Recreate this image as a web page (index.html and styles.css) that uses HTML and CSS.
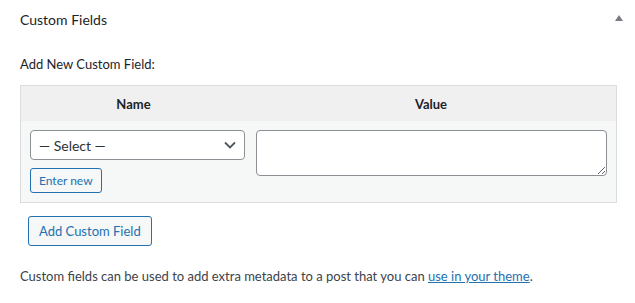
FILE: index.html
```html
<!DOCTYPE html>
<html lang="en">
<head>
<meta charset="utf-8">
<title>Custom Fields</title>
<link rel="stylesheet" href="styles.css">
</head>
<body>
<div class="postbox">
  <div class="postbox-header">
    <h2 class="hndle">Custom Fields</h2>
    <svg class="toggle" width="8" height="6" viewBox="0 0 8 6" aria-hidden="true"><polygon points="4,0 8,6 0,6" fill="#787c82"/></svg>
  </div>
  <div class="inside">
    <p class="label">Add New Custom Field:</p>
    <div class="cf-table">
      <div class="cf-head">
        <div class="cf-th">Name</div>
        <div class="cf-th">Value</div>
      </div>
      <div class="cf-row">
        <div class="cf-name">
          <div class="select">
            <span>— Select —</span>
            <svg width="12" height="8" viewBox="0 0 12 8" aria-hidden="true"><path d="M1 1.5l5 5 5-5" fill="none" stroke="#50575e" stroke-width="1.8"/></svg>
          </div>
          <a class="button small" href="#">Enter new</a>
        </div>
        <div class="cf-value">
          <textarea class="value-area"></textarea>
        </div>
      </div>
    </div>
    <div class="submit-row">
      <a class="button" href="#">Add Custom Field</a>
    </div>
    <p class="help">Custom fields can be used to add extra metadata to a post that you can <a href="#">use in your theme</a>.</p>
  </div>
</div>
</body>
</html>
```
FILE: styles.css
```css
* { box-sizing: border-box; }
html, body { margin: 0; padding: 0; background: #fff; }
body {
  font-family: Lato, "Liberation Sans", sans-serif;
  font-size: 13px;
  color: #3c434a;
  width: 635px;
  height: 303px;
  overflow: hidden;
}
.postbox-header {
  display: flex;
  align-items: center;
  justify-content: space-between;
  height: 38px;
  padding: 0 12px 0 20px;
}
.hndle {
  margin: 0;
  font-size: 14px;
  font-weight: 400;
  color: #1d2327;
}
.toggle { display: block; margin-top: -2px; }
.inside { padding: 0 18px 0 20px; }
.label {
  margin: 17px 0 0;
  line-height: 18px;
  font-size: 13px;
  color: #1d2327;
}
.cf-table {
  margin-top: 12px;
  border: 1px solid #dcdcde;
  background: #f6f7f7;
}
.cf-head {
  display: grid;
  grid-template-columns: 225px 1fr;
  height: 35px;
  background: #f0f0f1;
  align-items: center;
}
.cf-th {
  text-align: center;
  font-weight: 700;
  color: #1d2327;
}
.cf-row {
  display: grid;
  grid-template-columns: 225px 1fr;
}
.cf-name {
  padding: 9px 0 9px 9px;
  display: flex;
  flex-direction: column;
  align-items: flex-start;
  gap: 8px;
}
.select {
  width: 215px;
  height: 30px;
  border: 1px solid #8c8f94;
  border-radius: 4px;
  background: #fff;
  display: flex;
  align-items: center;
  justify-content: space-between;
  padding: 0 8px 0 8px;
  font-size: 14px;
  color: #2c3338;
}
.select svg { display: block; }
.cf-value { padding: 9px 9px 9px 10px; }
.value-area {
  display: block;
  width: 100%;
  height: 46px;
  margin: 0;
  border: 1px solid #8c8f94;
  border-radius: 4px;
  background: #fff;
  font: inherit;
  resize: both;
}
.button {
  display: inline-flex;
  align-items: center;
  height: 30px;
  padding: 0 10px;
  border: 1px solid #2271b1;
  border-radius: 3px;
  background: #f6f7f7;
  color: #2271b1;
  text-decoration: none;
  font-size: 13px;
}
.button.small {
  height: 25px;
  padding: 0 8px;
  font-size: 12px;
}
.submit-row { margin-top: 13px; padding-left: 8px; }
.help {
  margin: 21px 0 0;
  line-height: 18px;
  color: #3c434a;
}
.help a { color: #2271b1; text-decoration: underline; }
```
